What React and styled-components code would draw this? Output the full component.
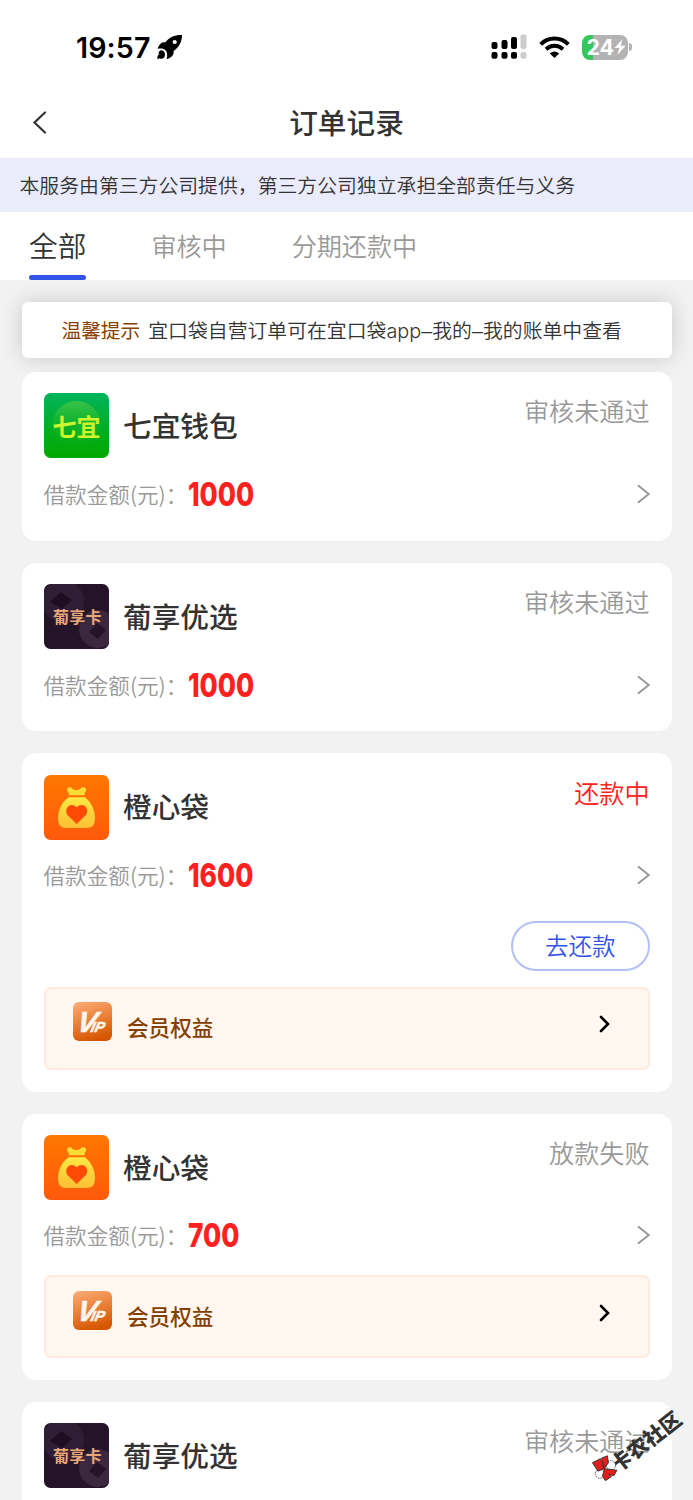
import React from 'react';
import styled, { createGlobalStyle } from 'styled-components';

const GlobalStyle = createGlobalStyle`
  *,
  *:before,
  *:after {
    box-sizing: border-box;
  }

  body {
    margin: 0;
    background: #f2f2f2;
  }

  svg {
    display: block;
    flex: none;
  }
`;

const Page = styled.div`
  position: relative;
  width: 693px;
  height: 1500px;
  overflow: hidden;
  background: #f2f2f2;
  color: #333;
  font-family: 'Noto Sans CJK SC', sans-serif;
  font-weight: 350;
  white-space: nowrap;
`;

const StatusBar = styled.div`
  display: flex;
  align-items: center;
  height: 88px;
  padding: 6px 61px 0 76px;
  background: #fff;
`;

const Clock = styled.span`
  width: 80px;
  padding-top: 1px;
  color: #000;
  font-family: Inter, sans-serif;
  font-size: 28.6px;
  font-weight: 600;
  letter-spacing: 0.1px;
`;

const StatusIcons = styled.div`
  display: flex;
  align-items: center;
  gap: 12px;
  margin-left: auto;
`;

const Battery = styled.div`
  display: flex;
  align-items: center;
`;

const BatteryBody = styled.div`
  display: flex;
  align-items: center;
  width: 46px;
  height: 25px;
  padding-left: 4.5px;
  border-radius: 8px;
  background: linear-gradient(90deg, #34c759 11px, #b3b3b3 11px);
  color: #fff;
  font-family: Inter, sans-serif;
  font-size: 21.5px;
  font-weight: 700;
  letter-spacing: -0.3px;
`;

const BatteryTip = styled.div`
  width: 3px;
  height: 8px;
  margin-left: 1px;
  border-radius: 0 3px 3px 0;
  background: #b3b3b3;
`;

const NavBar = styled.header`
  display: grid;
  grid-template-columns: 60px 1fr 60px;
  align-items: center;
  height: 70px;
  padding: 0 32px;
  background: #fff;
`;

const Title = styled.h1`
  margin: 0;
  padding-bottom: 2px;
  font-size: 28.7px;
  line-height: 40px;
  font-weight: 500;
  text-align: center;
`;

const Notice = styled.div`
  height: 54px;
  padding-left: 19.5px;
  background: #eaecfc;
  font-size: 19.85px;
  line-height: 53px;
`;

const Tabs = styled.nav`
  display: flex;
  height: 68px;
  padding-left: 29px;
  background: #fff;
`;

const Tab = styled.div`
  display: flex;
  flex-direction: column;
  justify-content: space-between;
  margin-right: 65px;
  color: ${({ $active }) => ($active ? '#333' : '#999')};
  font-size: ${({ $active }) => ($active ? '28.7px' : '25.1px')};
  line-height: 66px;

  &:after {
    content: '';
    height: 5.5px;
    margin-top: -5.5px;
    border-radius: 3px;
    background: ${({ $active }) => ($active ? '#3453eb' : 'transparent')};
  }
`;

const Tip = styled.div`
  display: flex;
  gap: 8px;
  height: 56px;
  margin: 22px 21.5px 14px;
  padding-left: 40px;
  border-radius: 6px;
  background: #fff;
  box-shadow: 0 0 22px rgba(0, 0, 0, 0.17);
  font-family: Inter, 'Noto Sans CJK SC', sans-serif;
  font-size: 19.85px;
  line-height: 58px;

  b {
    color: #8a4100;
    font-weight: 400;
    font-size: 19.7px;
  }
`;

const Dash = styled.span`
  font-family: 'Liberation Sans', sans-serif;
`;

const OrderList = styled.main`
  position: relative;
  display: flex;
  flex-direction: column;
  gap: 22px;
  padding: 0 21.5px;
`;

const Card = styled.section`
  flex: none;
  padding: 21.4px 22px 21.6px;
  border-radius: 14px;
  background: #fff;
`;

const CardHead = styled.div`
  display: flex;
  align-items: center;
  height: 65px;
`;

const Name = styled.h2`
  margin: 0 0 0 14.5px;
  padding-bottom: 1.5px;
  font-size: 28.7px;
  line-height: 40px;
  font-weight: 500;
`;

const Status = styled.span`
  align-self: flex-start;
  margin-left: auto;
  color: ${({ $red }) => ($red ? '#ff2020' : '#999')};
  font-size: 25.1px;
  line-height: 35px;
`;

const AmountRow = styled.div`
  display: flex;
  align-items: center;
  height: 50px;
  margin-top: 10.6px;
  color: #999;
  font-size: 21.6px;

  svg {
    margin-left: auto;
  }
`;

const Label = styled.span`
  width: 144.5px;
  line-height: 50px;
`;

const Amount = styled.strong`
  color: #ff2020;
  font-family: Inter, sans-serif;
  font-size: 33.3px;
  font-weight: 800;
  line-height: 50px;
  transform: scaleX(0.79);
  transform-origin: left;
`;

const RepayButton = styled.button`
  display: block;
  width: 138.5px;
  height: 50px;
  margin: 21.2px 0 0 auto;
  padding: 0 0 2px;
  border: 2px solid #b3bff7;
  border-radius: 25px;
  background: #fff;
  color: #3453eb;
  font-family: inherit;
  font-size: 23.5px;
  font-weight: 350;
  line-height: 44px;
`;

const VipBox = styled.div`
  display: flex;
  align-items: center;
  height: 83.4px;
  margin-top: ${({ $top }) => $top}px;
  padding: 0 36.5px 0 27.5px;
  border: 2px solid #ffeadd;
  border-radius: 7px;
  background: #fff7f0;
  color: #853f00;
  font-size: 21.6px;
  font-weight: 500;

  svg {
    margin-bottom: 13px;
  }

  svg:last-child {
    margin-left: auto;
    margin-bottom: 8px;
  }
`;

const VipText = styled.span`
  margin: 0 0 3px 15px;
`;

const Watermark = styled.div`
  position: absolute;
  left: 582px;
  top: 1432px;
  display: flex;
  align-items: center;
  color: #333;
  font-size: 20.8px;
  font-weight: 900;
  line-height: 32px;
  transform: rotate(-38deg);

  svg {
    margin-right: -2px;
    transform: translate(4px, -3px) rotate(38deg);
  }
`;

const Rocket = () => (
  <svg width="27" height="26" viewBox="0 0 27 26">
    <path
      d="M26 1C19 .7 13.500 3 9.500 8.200C6 7.800 3.500 9.500 1.500 14.800C5 14 8 14.500 9.500 16.200C11.500 18 11.500 21.500 10.700 25.200C16.300 23.300 18 20.500 17.600 17C23.300 13.200 26 7.500 26 1Z"
    />
    <circle cx="18.700" cy="8" r="2.100" fill="#fff" />
    <path d="M4.800 16.200C2.500 17.500 2 18.500 3.200 20.300C1.300 21.500 1.200 23 1.500 25.300L3.600 24.200C5.500 25.500 9 24.500 9 20.500C9 17.500 7 16 4.800 16.200Z" />
  </svg>
);

const Signal = () => (
  <svg width="36" height="26" viewBox="0 0 36 26">
    <rect x="0.500" y="8" width="6" height="7" rx="2" />
    <rect x="10.500" y="6" width="6" height="9" rx="2" />
    <rect x="20" y="3" width="6" height="12" rx="2" />
    <rect x="29.500" y="0.500" width="6" height="14.500" rx="2" fill="#ccc" />
    <rect x="0.500" y="18" width="6" height="6.700" rx="2" />
    <rect x="10.500" y="18" width="6" height="6.700" rx="2" />
    <rect x="20" y="18" width="6" height="6.700" rx="2" />
    <rect x="29.500" y="18" width="6" height="6.700" rx="2" fill="#ccc" />
  </svg>
);

const Wifi = () => (
  <svg width="31" height="24" viewBox="0 0 31 24" fill="none" stroke="#000" strokeWidth="4">
    <path d="M1.700 9.300C9.500 1.600 21.500 1.600 29.300 9.300" />
    <path d="M7 14.300C12 9.700 19 9.700 24 14.300" />
    <path d="M10.800 18.500Q15.500 14.500 20.200 18.500L15.500 23Z" fill="#000" stroke="none" />
  </svg>
);

const Bolt = () => (
  <svg width="12" height="16" viewBox="0 0 12 16" fill="#fff">
    <path d="M8.600 0L.5 9H5.400L3.300 16L11.700 6.700H6.700Z" />
  </svg>
);

const Chevron = () => (
  <svg width="14" height="20" viewBox="0 0 14 20" fill="none" stroke="#999" strokeWidth="1.900">
    <path d="M2.500 1.800L12.700 10L2.500 18.200" strokeLinecap="round" />
  </svg>
);

const QiyiLogo = () => (
  <svg width="65" height="65" viewBox="0 0 65 65">
    <defs>
      <linearGradient id="qiyi" x1="0" y1="0" x2="0" y2="1">
        <stop offset="0" stopColor="#02b45c" />
        <stop offset="0.650" stopColor="#02ad1a" />
        <stop offset="1" stopColor="#02a800" />
      </linearGradient>
      <linearGradient id="qiyiDisc" x1="0" y1="0" x2="0" y2="1">
        <stop offset="0" stopColor="#7bd63c" stopOpacity="0.450" />
        <stop offset="1" stopColor="#02ad1a" stopOpacity="0" />
      </linearGradient>
    </defs>
    <rect width="65" height="65" rx="6.500" fill="url(#qiyi)" />
    <circle cx="32.500" cy="32" r="24" fill="url(#qiyiDisc)" />
    <text x="8.500" y="42.500" fill="#cdf52c" fontSize="24" fontWeight="700" fontFamily="Noto Sans CJK SC, sans-serif">
      七宜
    </text>
  </svg>
);

const PuxiangLogo = () => (
  <svg width="65" height="65" viewBox="0 0 65 65">
    <defs>
      <clipPath id="puxiang">
        <rect width="65" height="65" rx="6.500" />
      </clipPath>
    </defs>
    <g clipPath="url(#puxiang)">
      <rect width="65" height="65" fill="#241329" />
      <circle cx="19" cy="17" r="21" fill="#301e36" />
      <path d="M17 8L28 16L18 25L6 18Z" fill="#1d0e24" />
      <circle cx="54" cy="45" r="19" fill="#3b273e" />
      <path d="M53 39L62 46L54 55L45 48Z" fill="#241329" />
    </g>
    <text
      x="9"
      y="39"
      fill="#e9a878"
      fontSize="16"
      fontWeight="700"
      letterSpacing="0.200"
      fontFamily="Noto Sans CJK SC, sans-serif"
    >
      葡享卡
    </text>
  </svg>
);

const ChengxinLogo = () => (
  <svg width="65" height="65" viewBox="0 0 65 65">
    <defs>
      <linearGradient id="orange" x1="0" y1="0" x2="0" y2="1">
        <stop offset="0" stopColor="#ff7800" />
        <stop offset="1" stopColor="#ff590c" />
      </linearGradient>
      <linearGradient id="bag" x1="0" y1="0" x2="0" y2="1">
        <stop offset="0" stopColor="#ffe944" />
        <stop offset="1" stopColor="#ffbf35" />
      </linearGradient>
    </defs>
    <rect width="65" height="65" rx="6.500" fill="url(#orange)" />
    <path
      d="M23 14.500C23.500 12 26.500 11.500 28.500 13.700C30.500 15.500 34.500 15.500 36.500 13.700C38.500 11.500 41.500 12 42.300 14.500C42.300 17 39.500 18 40.800 20.300H24.700C25.700 18 23 17 23 14.500Z"
      fill="#ffdd36"
    />
    <path
      d="M24.700 22.300H41C47 27 51 34.500 51 43.500C51 50 48 53 43 53H22C17 53 14 50 14 43.500C14 34.500 18 27 24.700 22.300Z"
      fill="url(#bag)"
    />
    <path
      d="M32.700 49L24.200 40.800C18.500 35 26 25.500 32.700 32.300C39.500 25.500 47 35 41.200 40.800Z"
      fill="#ff4b05"
    />
  </svg>
);

const VipLogo = () => (
  <svg width="39" height="39" viewBox="0 0 39 39">
    <defs>
      <linearGradient id="vip" x1="0.200" y1="0" x2="0.500" y2="1">
        <stop offset="0" stopColor="#fba971" />
        <stop offset="1" stopColor="#d65600" />
      </linearGradient>
    </defs>
    <rect width="39" height="39" rx="6" fill="url(#vip)" />
    <text
      x="6"
      y="30"
      fill="#fff6ee"
      stroke="#fff6ee"
      strokeWidth="0.600"
      fontFamily="Liberation Sans, sans-serif"
      fontWeight="700"
      fontStyle="italic"
      fontSize="29"
      transform="translate(3.500 0) skewX(-13)"
    >
      V<tspan dx="-5" fontSize="14.500">IP</tspan>
    </text>
  </svg>
);

const Pinwheel = () => (
  <svg width="26" height="26" viewBox="0 0 26 26" stroke="#222" strokeWidth="0.800">
    <circle cx="19" cy="10" r="4.600" fill="#fff" strokeDasharray="1.500 1" />
    <circle cx="8" cy="18.500" r="4.600" fill="#fff" strokeDasharray="1.500 1" />
    <path d="M12.500 13.500L6 16L.5 7.500L8.500 3.500Z" fill="#e0201c" />
    <path d="M12.500 13.500L9.500 3L15.500.5L16.500 7.500Z" fill="#e0201c" />
    <path d="M12.500 13.500L25 15L22 20.500L17 19.500L19.500 21.500L13.500 25.500L10.500 21Z" fill="#e0201c" />
  </svg>
);

const orders = [
  { id: 1, name: '七宜钱包', logo: QiyiLogo, status: '审核未通过', amount: 1000 },
  { id: 2, name: '葡享优选', logo: PuxiangLogo, status: '审核未通过', amount: 1000 },
  { id: 3, name: '橙心袋', logo: ChengxinLogo, status: '还款中', amount: 1600, repay: true, vip: true },
  { id: 4, name: '橙心袋', logo: ChengxinLogo, status: '放款失败', amount: 700, vip: true },
  { id: 5, name: '葡享优选', logo: PuxiangLogo, status: '审核未通过' },
];

const Order = ({ order }) => {
  const Logo = order.logo;
  return (
    <Card>
      <CardHead>
        <Logo />
        <Name>{order.name}</Name>
        <Status $red={order.repay}>{order.status}</Status>
      </CardHead>
      <AmountRow>
        {order.amount && (
          <>
            <Label>借款金额(元)：</Label>
            <Amount>{order.amount}</Amount>
            <Chevron />
          </>
        )}
      </AmountRow>
      {order.repay && <RepayButton>去还款</RepayButton>}
      {order.vip && (
        <VipBox $top={order.repay ? 15.2 : 14.6}>
          <VipLogo />
          <VipText>会员权益</VipText>
          <svg width="14" height="20" viewBox="0 0 14 20" fill="none" stroke="#000" strokeWidth="2.600">
            <path d="M4 3L11 10L4 17" strokeLinecap="round" />
          </svg>
        </VipBox>
      )}
    </Card>
  );
};

const App = () => {
  return (
    <Page lang="zh-CN">
      <GlobalStyle />
      <StatusBar>
        <Clock>19:57</Clock>
        <Rocket />
        <StatusIcons>
          <Signal />
          <Wifi />
          <Battery>
            <BatteryBody>
              24
              <Bolt />
            </BatteryBody>
            <BatteryTip />
          </Battery>
        </StatusIcons>
      </StatusBar>
      <NavBar>
        <svg width="15" height="24" viewBox="0 0 15 24" fill="none" stroke="#333" strokeWidth="2.200">
          <path d="M13 1.500L2.500 11.500L13 21.500" strokeLinecap="round" />
        </svg>
        <Title>订单记录</Title>
      </NavBar>
      <Notice>本服务由第三方公司提供，第三方公司独立承担全部责任与义务</Notice>
      <Tabs>
        <Tab $active>全部</Tab>
        <Tab>审核中</Tab>
        <Tab>分期还款中</Tab>
      </Tabs>
      <Tip>
        <b>温馨提示</b>
        <span>
          宜口袋自营订单可在宜口袋app<Dash>–</Dash>我的<Dash>–</Dash>我的账单中查看
        </span>
      </Tip>
      <OrderList>
        {orders.map((order) => (
          <Order key={order.id} order={order} />
        ))}
      </OrderList>
      <Watermark>
        <Pinwheel />
        卡农社区
      </Watermark>
    </Page>
  );
};

export default App;
